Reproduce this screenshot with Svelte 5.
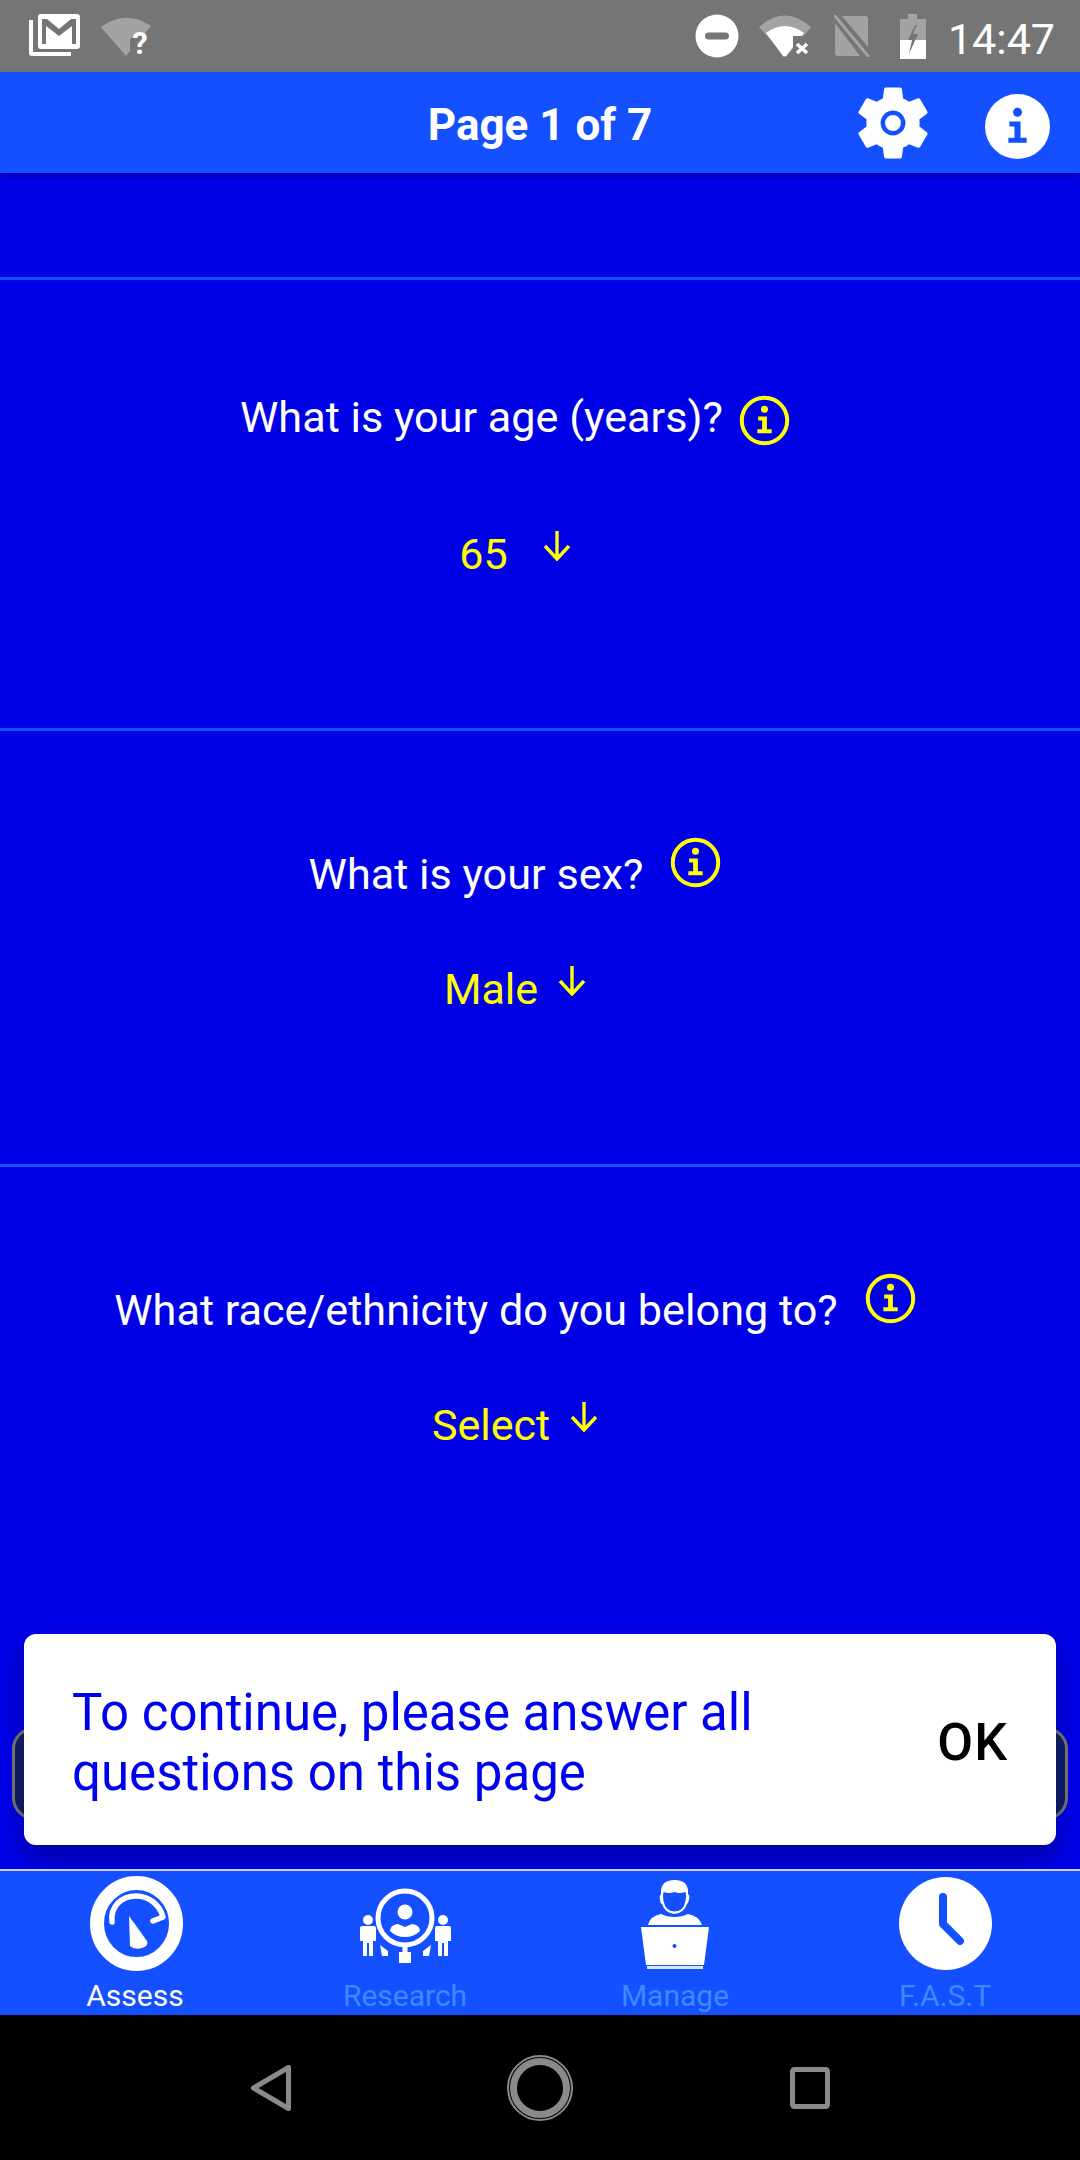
<script>
  const questions = [
    { label: 'What is your age (years)?', value: '65', kind: 'first' },
    { label: 'What is your sex?', value: 'Male', kind: '' },
    { label: 'What race/ethnicity do you belong to?', value: 'Select', kind: '' }
  ];
  const tabs = ['Assess', 'Research', 'Manage', 'F.A.S.T'];
</script>

{#snippet infoGlyph(color)}
  <circle cx="32" cy="18" r="4.4" fill={color} />
  <path d="M24 27h11v16h6v5H23v-5h6V32h-5z" fill={color} />
{/snippet}

{#snippet yellowInfo()}
  <svg class="q-info" viewBox="0 0 64 64">
    <circle cx="32" cy="32" r="28.500" fill="none" stroke="#ffff00" stroke-width="5" />
    {@render infoGlyph('#ffff00')}
  </svg>
{/snippet}

{#snippet arrow()}
  <svg class="arrow" viewBox="0 0 28 30">
    <path d="M14 0v27M2 15l12 13 12-13" fill="none" stroke="#ffff00" stroke-width="3.4" />
  </svg>
{/snippet}

<div class="screen">
  <div class="status">
    <div class="status-left">
      <svg class="st-mail" viewBox="0 0 52 44">
        <path d="M1 6v33q0 3 3 3h39v-4H5V6z" fill="#fff" />
        <rect x="10" y="0" width="42" height="35" rx="3" fill="#fff" />
        <path d="M14 5v25h4V12l13 10 13-10v18h4V5h-5L31 15 19 5z" fill="#757575" />
      </svg>
      <div class="wifiq">
        <svg class="st-wifiq" viewBox="0 0 50 40">
          <path d="M0 10Q25-8 50 9L25 39z" fill="#a3a3a3" />
          <path d="M29 38V22q4-4 21-3v19z" fill="#757575" />
        </svg>
        <span class="qmark">?</span>
      </div>
    </div>
    <div class="status-right">
      <svg class="st-dnd" viewBox="0 0 44 44">
        <circle cx="22" cy="22" r="21.500" fill="#fff" />
        <rect x="10" y="18.500" width="24" height="7" rx="3.500" fill="#757575" />
      </svg>
      <svg class="st-wifix" viewBox="0 0 52 42">
        <path d="M0 12Q26-11 52 12L27 42z" fill="#a3a3a3" />
        <path d="M7 18Q26 4 45 18L27 41q-2 1-3 0z" fill="#fff" />
        <path d="M34 21h18v21H34z" fill="#757575" />
        <path d="M38 29l10 9M48 29l-10 9" stroke="#fff" stroke-width="3.600" />
      </svg>
      <svg class="st-sim" viewBox="0 0 36 42">
        <path d="M8 1h23q3 0 3 3v28zM1 8l25 33H4q-3 0-3-3z" fill="#a3a3a3" />
        <path d="M1 1l33 40" stroke="#a3a3a3" stroke-width="3" stroke-linecap="round" />
      </svg>
      <svg class="st-batt" viewBox="0 0 26 45">
        <path d="M8 0h9v5h9v21H0V5h8z" fill="#a3a3a3" />
        <path d="M0 26h26v19H0z" fill="#fff" />
        <path d="M15 11L8 26h4l-3 14 9-20h-5l4-9z" fill="#757575" />
      </svg>
      <span class="time">14:47</span>
    </div>
  </div>

  <header class="topbar">
    <span class="title">Page 1 of 7</span>
    <svg class="gear" viewBox="2.600 2 18.800 20">
      <path fill="#fff" d="M19.14 12.94c.04-.3.06-.61.06-.94 0-.32-.02-.64-.07-.94l2.03-1.58a.49.49 0 0 0 .12-.61l-1.92-3.32a.488.488 0 0 0-.59-.22l-2.39.96c-.5-.38-1.03-.7-1.62-.94l-.36-2.54a.484.484 0 0 0-.48-.41h-3.84c-.24 0-.43.17-.47.41l-.36 2.54c-.59.24-1.13.57-1.62.94l-2.39-.96c-.22-.08-.47 0-.59.22L2.74 8.87c-.12.21-.08.47.12.61l2.03 1.58c-.05.3-.09.63-.09.94s.02.64.07.94l-2.03 1.58a.49.49 0 0 0-.12.61l1.92 3.32c.12.22.37.29.59.22l2.39-.96c.5.38 1.03.7 1.62.94l.36 2.54c.05.24.24.41.48.41h3.84c.24 0 .44-.17.47-.41l.36-2.54c.59-.24 1.13-.56 1.62-.94l2.39.96c.22.08.47 0 .59-.22l1.92-3.32c.12-.22.07-.47-.12-.61l-2.01-1.58z" />
      <circle cx="12" cy="12" r="2.750" fill="#fff" stroke="#1450ff" stroke-width="1.200" />
    </svg>
    <svg class="head-info" viewBox="0 0 64 64">
      <circle cx="32" cy="32" r="32" fill="#fff" />
      {@render infoGlyph('#1450ff')}
    </svg>
  </header>

  <main class="body">
    <div class="spacer"></div>
    {#each questions as q}
      <section class="question" class:first={q.kind === 'first'}>
        <div class="q-row">
          <span class="q-label">{q.label}</span>
          {@render yellowInfo()}
        </div>
        <div class="v-row">
          <span class="q-value">{q.value}</span>
          {@render arrow()}
        </div>
      </section>
    {/each}
    <div class="next-btn"></div>

    <div class="snack">
      <p>To continue, please answer all questions on this page</p>
      <span class="ok">OK</span>
    </div>
  </main>

  <nav class="tabs">
    {#each tabs as t, i}
      <div class="tab" class:active={i === 0}>
        <div class="tab-icon">
          {#if i === 0}
            <svg class="gauge" width="93" height="95" viewBox="0 0 93 95">
              <ellipse cx="46.500" cy="47.500" rx="39.500" ry="40.500" fill="none" stroke="#fff" stroke-width="14" />
              <path d="M22 46C20 30 32 20 46 20c13 0 24 9 27 21l-10 4" fill="none" stroke="#fff" stroke-width="5.500" stroke-linecap="round" stroke-linejoin="round" />
              <path d="M39 40L57 65q2 5-5 7-8 2-12-2z" fill="#fff" />
            </svg>
          {:else if i === 1}
            <svg width="91" height="81" viewBox="0 0 91 81">
              <circle cx="45" cy="35" r="27" fill="none" stroke="#fff" stroke-width="5" />
              <circle cx="45" cy="29" r="7.500" fill="#fff" />
              <path d="M30 48q0-6 8-7l7 3 7-3q8 1 8 7-6 6-15 6t-15-6z" fill="#fff" />
              <path d="M42.500 61h5v10h-5z" fill="#fff" />
              <rect x="39" y="69" width="12" height="11" fill="#fff" />
              <circle cx="8" cy="37" r="5" fill="#fff" />
              <path d="M2 43h12q2 0 2 2v13h-3v15H9V60H7v13H3V58H0V45q0-2 2-2z" fill="#fff" />
              <circle cx="83" cy="37" r="5" fill="#fff" />
              <path d="M77 43h12q2 0 2 2v13h-3v15h-4V60h-2v13h-4V58h-3V45q0-2 2-2z" fill="#fff" />
              <path d="M20 62l8 6v5h-6zM71 62l-8 6v5h6z" fill="#fff" />
            </svg>
          {:else if i === 2}
            <svg width="70" height="90" viewBox="0 0 70 90">
              <path d="M21 15Q20 1 34.500 1T48 15q2 1 1 6-1 3-2 4-3 9-12.500 10Q25 34 22 25q-2-1-2-4-1-4 1-6z" fill="#fff" />
              <path d="M23.500 13q6 2 11 0 5 2 11 0 1 3 0 9-2 10.500-11 10.500T23.500 22q-1-5 0-9z" fill="#1450ff" />
              <path d="M8 46q2-9 13-11 6 3 13.500 3T48 35q11 2 14 11z" fill="#fff" />
              <path d="M1 48h68l-5 38H6z" fill="#fff" />
              <rect x="7" y="87" width="56" height="3" fill="#dbe5ff" />
              <circle cx="34.500" cy="67" r="2" fill="#1450ff" />
            </svg>
          {:else}
            <svg width="93" height="93" viewBox="0 0 93 93">
              <circle cx="46.500" cy="46.500" r="46.500" fill="#fff" />
              <path d="M44 20v27l17 17" fill="none" stroke="#1450ff" stroke-width="8" stroke-linecap="round" stroke-linejoin="round" />
            </svg>
          {/if}
        </div>
        <span class="tab-label">{t}</span>
      </div>
    {/each}
  </nav>

  <div class="navbar">
    <svg class="nav-back" viewBox="0 0 40 46">
      <path d="M37.500 2.500v41L2.500 23z" fill="none" stroke="#8a8a8a" stroke-width="5" stroke-linejoin="round" />
    </svg>
    <svg class="nav-home" viewBox="0 0 66 66">
      <circle cx="33" cy="33" r="32" fill="none" stroke="#8a8a8a" stroke-width="2" />
      <circle cx="33" cy="33" r="26.500" fill="none" stroke="#8a8a8a" stroke-width="7" />
    </svg>
    <svg class="nav-recent" viewBox="0 0 40 42">
      <rect x="2.500" y="2.500" width="35" height="37" rx="2" fill="none" stroke="#8a8a8a" stroke-width="5" />
    </svg>
  </div>
</div>

<style>
  :global(body) {
    margin: 0;
    background: #000;
  }

  .screen {
    width: 1080px;
    height: 2160px;
    display: flex;
    flex-direction: column;
    font-family: Roboto, sans-serif;
    overflow: hidden;
  }

  .status {
    height: 72px;
    flex: none;
    background: #757575;
    display: flex;
    justify-content: space-between;
    align-items: center;
    padding: 0 25px 0 28px;
    box-sizing: border-box;
  }

  .status-left, .status-right {
    display: flex;
    align-items: center;
  }

  .st-mail { width: 52px; height: 44px; }
  .wifiq { position: relative; width: 50px; height: 40px; margin-left: 21px; margin-top: 2px; }
  .st-wifiq { display: block; width: 50px; height: 40px; }
  .qmark {
    position: absolute;
    left: 30px;
    top: 11px;
    width: 18px;
    text-align: center;
    color: #fff;
    font-size: 31px;
    font-weight: 700;
    line-height: 31px;
  }
  .st-dnd { width: 44px; height: 44px; }
  .st-wifix { width: 52px; height: 42px; margin-left: 20px; }
  .st-sim { width: 36px; height: 42px; margin-left: 23px; }
  .st-batt { width: 26px; height: 45px; margin-left: 30px; }

  .time {
    color: #fff;
    font-size: 43px;
    margin-left: 22px;
    margin-top: 6px;
    line-height: 1;
  }

  .topbar {
    position: relative;
    z-index: 2;
    height: 101px;
    flex: none;
    background: #1450ff;
    display: flex;
    align-items: center;
    justify-content: center;
    box-shadow: 0 3px 6px rgba(0, 0, 0, 0.25);
  }

  .title {
    color: #fff;
    font-size: 44px;
    font-weight: 700;
    margin-top: 5px;
  }

  .gear, .head-info {
    position: absolute;
  }

  .gear { left: 857px; top: 14px; width: 72px; height: 74px; }
  .head-info { left: 985px; top: 22px; width: 65px; height: 65px; }

  .body {
    position: relative;
    flex: 1;
    background: #0000e6;
    min-height: 0;
  }

  .spacer {
    height: 104px;
  }

  .question {
    height: 436px;
    box-sizing: border-box;
    border-top: 3px solid #1450ff;
    padding: 113px 50px 0 0;
    display: flex;
    flex-direction: column;
    align-items: center;
  }

  .question.first {
    height: 451px;
    padding-top: 107px;
  }

  .q-row {
    display: flex;
    align-items: center;
    gap: 27px;
    height: 60px;
  }

  .first .q-row {
    gap: 16px;
  }

  .q-label {
    color: #fff;
    font-size: 43.200px;
    white-space: nowrap;
  }

  .q-info {
    width: 51px;
    height: 51px;
    margin-bottom: 24px;
  }

  .first .q-info {
    margin-bottom: 0;
    margin-top: 6px;
  }

  .v-row {
    display: flex;
    align-items: center;
    gap: 20px;
    margin-top: 59px;
  }

  .first .v-row {
    gap: 35px;
    margin-top: 81px;
  }

  .q-value {
    color: #ffff00;
    font-size: 43px;
    line-height: 52px;
  }

  .arrow {
    width: 28px;
    height: 30px;
    margin-bottom: 16px;
  }

  .next-btn {
    margin: 127px 12px 0;
    height: 93px;
    box-sizing: border-box;
    background: #0f1f6e;
    border: 3px solid #777;
    border-radius: 22px;
  }

  .snack {
    position: absolute;
    left: 24px;
    right: 24px;
    top: 1461px;
    height: 211px;
    box-sizing: border-box;
    background: #fff;
    border-radius: 12px;
    padding: 6px 48px 0;
    display: flex;
    align-items: center;
    justify-content: space-between;
    box-shadow: 0 12px 24px rgba(0, 0, 0, 0.3);
  }

  .snack p {
    margin: 0;
    width: 700px;
    color: #0000f0;
    font-size: 51px;
    line-height: 60px;
  }

  .ok {
    color: #000;
    font-size: 52px;
    font-weight: 500;
    letter-spacing: 1px;
  }

  .tabs {
    position: relative;
    height: 146px;
    flex: none;
    box-sizing: border-box;
    background: #1450ff;
    border-top: 2px solid #c8d4ff;
    display: grid;
    grid-template-columns: repeat(4, 1fr);
  }

  .tab {
    display: flex;
    flex-direction: column;
    align-items: center;
  }

  .tab-icon {
    height: 100px;
    padding-top: 5px;
    box-sizing: border-box;
    display: flex;
    align-items: center;
  }

  .gauge {
    margin-left: 2px;
  }

  .tab-label {
    color: #3d8aff;
    font-size: 30px;
    line-height: 34px;
    margin-top: 8px;
  }

  .active .tab-label {
    color: #fff;
  }

  .navbar {
    position: relative;
    height: 145px;
    flex: none;
    background: #000;
  }

  .nav-back { width: 40px; height: 46px; position: absolute; left: 251px; top: 50px; }
  .nav-home { width: 66px; height: 66px; position: absolute; left: 507px; top: 40px; }
  .nav-recent { width: 40px; height: 42px; position: absolute; left: 790px; top: 52px; }
</style>
